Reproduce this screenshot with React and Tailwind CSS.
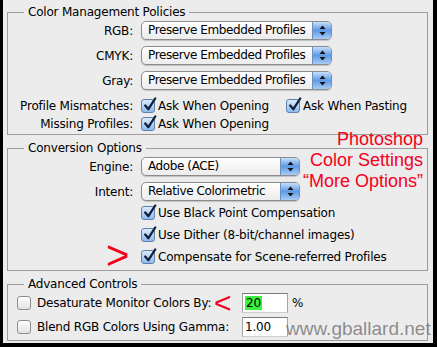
import React from "react";

const Check = ({ checked }) => (
  <span
    className={
      checked
        ? "relative inline-block w-[14px] h-[14px] shrink-0 rounded-[3px] border border-[#5f7fae] bg-linear-to-b from-[#dceafa] to-[#8ebbee]"
        : "relative inline-block w-[14px] h-[14px] shrink-0 rounded-[3px] border border-[#8e8e8e] bg-linear-to-b from-white to-[#e2e2e2]"
    }
  >
    {checked && (
      <svg className="absolute left-[1px] top-[-3px]" width="14" height="15" viewBox="0 0 14 15">
        <path d="M2.2 8.5 L5.4 12.2 L12.2 1.5" stroke="#10203a" strokeWidth="2.3" fill="none" strokeLinecap="round" strokeLinejoin="round" />
      </svg>
    )}
  </span>
);

const Popup = ({ w, text }) => (
  <div className={w}>
    <div className="flex h-[19px] w-full overflow-hidden rounded-[5px] border border-[#8c8c8c] bg-linear-to-b from-white to-[#ececec] shadow-[0_1px_1px_rgba(0,0,0,0.18)]">
      <div className="flex-1 pl-[6px] leading-[17px] tracking-[-0.4px] whitespace-nowrap">{text}</div>
      <div className="flex w-[19px] items-center justify-center border-l border-[#6d8fc0] bg-linear-to-b from-[#c6defa] via-[#5d9ae6] to-[#a9cdf5]">
        <svg width="7" height="11" viewBox="0 0 7 11">
          <path d="M3.5 0.5 L6.5 4 L0.5 4 Z" fill="#111" />
          <path d="M3.5 10.5 L6.5 7 L0.5 7 Z" fill="#111" />
        </svg>
      </div>
    </div>
  </div>
);

const CheckLabel = ({ checked, children, className = "" }) => (
  <div className={"flex items-center " + className}>
    <Check checked={checked} />
    <span className="ml-[3px] whitespace-nowrap">{children}</span>
  </div>
);

const Field = ({ children }) => (
  <div className="h-[20px] w-[46px] border border-t-[#7a7a7a] border-x-[#a5a5a5] border-b-[#cdcdcd] bg-white pl-[2px] leading-[18px]">
    {children}
  </div>
);

export default function App() {
  return (
    <div className="relative h-[347px] w-[437px] overflow-hidden border-l-[3px] border-r-[4px] border-b-[4px] border-black bg-[#ececec] font-['DejaVu_Sans',sans-serif] text-[12px] tracking-[-0.2px] text-black">
      <fieldset className="ml-[4px] mr-[5px] mt-[4px] border border-[#9d9d9d] px-0 pb-[1px]">
        <legend className="ml-[16px] px-[4px] leading-[16px]">Color Management Policies</legend>
        <div className="mt-[1px] flex flex-col gap-[6px]">
          {["RGB:", "CMYK:", "Gray:"].map((l) => (
            <div key={l} className="flex h-[19px] items-center">
              <div className="w-[125px] text-right">{l}</div>
              <div className="ml-[8px]">
                <Popup w="w-[191px]" text="Preserve Embedded Profiles" />
              </div>
            </div>
          ))}
        </div>
        <div className="mt-[7px]">
          <div className="flex h-[18px] items-center">
            <div className="w-[125px] text-right whitespace-nowrap">Profile Mismatches:</div>
            <CheckLabel checked className="ml-[8px] w-[145px]">Ask When Opening</CheckLabel>
            <CheckLabel checked>Ask When Pasting</CheckLabel>
          </div>
          <div className="flex h-[18px] items-center">
            <div className="w-[125px] text-right whitespace-nowrap">Missing Profiles:</div>
            <CheckLabel checked className="ml-[8px]">Ask When Opening</CheckLabel>
          </div>
        </div>
      </fieldset>

      <fieldset className="ml-[4px] mr-[5px] mt-[5px] border border-[#9d9d9d] px-0 pb-[2px]">
        <legend className="ml-[16px] px-[4px] leading-[16px]">Conversion Options</legend>
        <div className="mt-[1px] flex flex-col gap-[6px]">
          <div className="flex h-[19px] items-center">
            <div className="w-[125px] text-right">Engine:</div>
            <div className="ml-[8px]">
              <Popup w="w-[159px]" text="Adobe (ACE)" />
            </div>
          </div>
          <div className="flex h-[19px] items-center">
            <div className="w-[125px] text-right">Intent:</div>
            <div className="ml-[8px]">
              <Popup w="w-[159px]" text="Relative Colorimetric" />
            </div>
          </div>
        </div>
        <div className="mt-[1px] pl-[133px]">
          <CheckLabel checked className="h-[22px]">Use Black Point Compensation</CheckLabel>
          <CheckLabel checked className="h-[22px]">Use Dither (8-bit/channel images)</CheckLabel>
          <CheckLabel checked className="h-[22px]">Compensate for Scene-referred Profiles</CheckLabel>
        </div>
      </fieldset>

      <fieldset className="ml-[4px] mr-[5px] mt-[5px] border border-[#9d9d9d] px-0 pb-[3px]">
        <legend className="ml-[16px] px-[4px] leading-[16px]">Advanced Controls</legend>
        <div className="mt-[1px] flex flex-col gap-[4px] pl-[9px]">
          <div className="flex h-[20px] items-center">
            <Check checked={false} />
            <span className="ml-[6px] w-[205px] whitespace-nowrap">Desaturate Monitor Colors By:</span>
            <Field>
              <span className="bg-[#3df03d] px-[1px]">20</span>
            </Field>
            <span className="ml-[4px]">%</span>
          </div>
          <div className="flex h-[20px] items-center">
            <Check checked={false} />
            <span className="ml-[6px] w-[205px] whitespace-nowrap">Blend RGB Colors Using Gamma:</span>
            <Field>1.00</Field>
          </div>
        </div>
      </fieldset>

      <div className="absolute right-[10px] top-[129px] text-right font-['Liberation_Sans',Arial,sans-serif] text-[18px] leading-[21px] tracking-normal text-[#f5001a]">
        <div>Photoshop</div>
        <div>Color Settings</div>
        <div>“More Options”</div>
      </div>

      <div className="absolute left-[103px] top-[233px] font-['Liberation_Sans',Arial,sans-serif] text-[40px] leading-[44px] tracking-normal text-[#f5001a]">
        &gt;
      </div>
      <div className="absolute left-[211px] top-[286px] font-['Liberation_Sans',Arial,sans-serif] text-[30px] leading-[34px] tracking-normal text-[#f5001a]">
        &lt;
      </div>

      <div className="absolute left-[283px] top-[318px] font-['Liberation_Sans',Arial,sans-serif] text-[19px] leading-[22px] tracking-normal text-[#7a7a7a]/85">
        www.gballard.net
      </div>
    </div>
  );
}
